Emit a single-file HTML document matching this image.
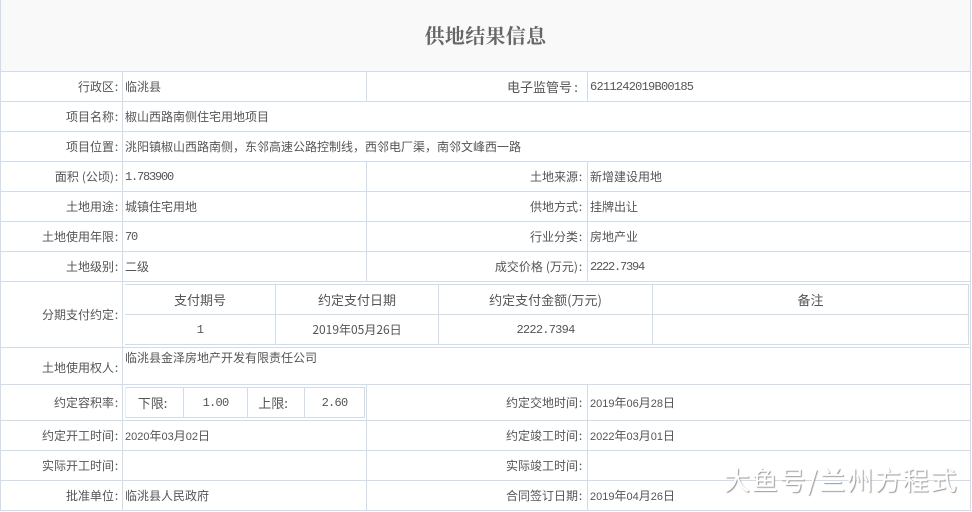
<!DOCTYPE html>
<html lang="zh-CN">
<head>
<meta charset="utf-8">
<title>供地结果信息</title>
<style>
html,body{margin:0;padding:0;background:#fff;}
#p{position:relative;width:972px;height:512px;overflow:hidden;background:#fff;font-family:"WenQuanYi Zen Hei","Noto Sans CJK SC",sans-serif;font-size:12px;color:#555;}
#p div{position:absolute;}
.h{height:1px;background:#cfdcec;}
.v{width:1px;background:#cfdcec;}
.t{white-space:nowrap;line-height:16px;height:16px;margin-top:1px;}
.l{text-align:right;left:0;width:119px;}
.r{text-align:right;left:400px;width:183px;}
.a{left:125px;}
.b{left:590px;}
.c{text-align:center;}
.m{font-family:"Liberation Mono",monospace;font-size:12px;letter-spacing:-1.2px;}
.n{font-family:"Liberation Mono",monospace;font-size:12px;letter-spacing:-.75px;}
i{font-style:normal;display:inline-block;width:5px;text-align:center;}
u{text-decoration:none;font-family:"Liberation Sans",sans-serif;font-size:11px;}
s{text-decoration:none;display:inline-block;width:3px;}
</style>
</head>
<body>
<div id="p">
<div style="left:0;top:0;width:971px;height:71px;background:#f9f9f9;"></div>
<div class="t" style="left:0;top:22px;width:971px;height:24px;line-height:24px;text-align:center;font-family:'Noto Serif CJK SC','Liberation Serif',serif;font-weight:700;font-size:20px;letter-spacing:.3px;color:#666;">供地结果信息</div>

<!-- horizontal -->
<div class="h" style="left:0;top:71px;width:971px;"></div>
<div class="h" style="left:0;top:101px;width:971px;"></div>
<div class="h" style="left:0;top:131px;width:971px;"></div>
<div class="h" style="left:0;top:161px;width:971px;"></div>
<div class="h" style="left:0;top:191px;width:971px;"></div>
<div class="h" style="left:0;top:221px;width:971px;"></div>
<div class="h" style="left:0;top:251px;width:971px;"></div>
<div class="h" style="left:0;top:281px;width:971px;"></div>
<div class="h" style="left:0;top:347px;width:971px;"></div>
<div class="h" style="left:0;top:384px;width:971px;"></div>
<div class="h" style="left:0;top:420px;width:971px;"></div>
<div class="h" style="left:0;top:450px;width:971px;"></div>
<div class="h" style="left:0;top:480px;width:971px;"></div>
<div class="h" style="left:0;top:510px;width:971px;"></div>

<!-- vertical -->
<div class="v" style="left:0;top:0;height:511px;"></div>
<div class="v" style="left:970px;top:0;height:511px;"></div>
<div class="v" style="left:122px;top:71px;height:440px;"></div>
<div class="v" style="left:366px;top:71px;height:30px;"></div>
<div class="v" style="left:587px;top:71px;height:30px;"></div>
<div class="v" style="left:366px;top:161px;height:120px;"></div>
<div class="v" style="left:587px;top:161px;height:120px;"></div>
<div class="v" style="left:366px;top:384px;height:127px;"></div>
<div class="v" style="left:587px;top:384px;height:127px;"></div>

<!-- nested payment table -->
<div class="h" style="left:125px;top:284px;width:844px;"></div>
<div class="h" style="left:125px;top:314px;width:844px;"></div>
<div class="h" style="left:125px;top:344px;width:844px;"></div>
<div class="v" style="left:275px;top:284px;height:61px;"></div>
<div class="v" style="left:438px;top:284px;height:61px;"></div>
<div class="v" style="left:652px;top:284px;height:61px;"></div>
<div class="v" style="left:968px;top:284px;height:61px;"></div>

<!-- nested FAR table -->
<div class="h" style="left:125px;top:387px;width:240px;"></div>
<div class="h" style="left:125px;top:417px;width:240px;"></div>
<div class="v" style="left:125px;top:387px;height:31px;background:#e6edf6;"></div>
<div class="v" style="left:183px;top:387px;height:31px;"></div>
<div class="v" style="left:247px;top:387px;height:31px;"></div>
<div class="v" style="left:304px;top:387px;height:31px;"></div>
<div class="v" style="left:364px;top:387px;height:31px;"></div>

<!-- labels left -->
<div class="t l" style="top:78px;">行政区<i>:</i></div>
<div class="t l" style="top:108px;">项目名称<i>:</i></div>
<div class="t l" style="top:138px;">项目位置<i>:</i></div>
<div class="t l" style="top:168px;">面积<s></s>(公顷)<i>:</i></div>
<div class="t l" style="top:198px;">土地用途<i>:</i></div>
<div class="t l" style="top:228px;">土地使用年限<i>:</i></div>
<div class="t l" style="top:258px;">土地级别<i>:</i></div>
<div class="t l" style="top:306px;">分期支付约定<i>:</i></div>
<div class="t l" style="top:359px;">土地使用权人<i>:</i></div>
<div class="t l" style="top:394px;">约定容积率<i>:</i></div>
<div class="t l" style="top:427px;">约定开工时间<i>:</i></div>
<div class="t l" style="top:457px;">实际开工时间<i>:</i></div>
<div class="t l" style="top:487px;">批准单位<i>:</i></div>

<!-- values left -->
<div class="t a" style="top:78px;">临洮县</div>
<div class="t a" style="top:108px;">椒山西路南侧住宅用地项目</div>
<div class="t a" style="top:138px;">洮阳镇椒山西路南侧，东邻高速公路控制线，西邻电厂渠，南邻文峰西一路</div>
<div class="t a m" style="top:168px;">1.783900</div>
<div class="t a" style="top:198px;">城镇住宅用地</div>
<div class="t a m" style="top:228px;">70</div>
<div class="t a" style="top:258px;">二级</div>
<div class="t a" style="top:349px;">临洮县金泽房地产开发有限责任公司</div>
<div class="t a" style="top:427px;"><u>2020</u>年<u>03</u>月<u>02</u>日</div>
<div class="t a" style="top:487px;">临洮县人民政府</div>

<!-- labels right -->
<div class="t r" style="top:78px;font-size:13px;width:180px;">电子监管号<i style="width:8px;">:</i></div>
<div class="t r" style="top:168px;">土地来源<i>:</i></div>
<div class="t r" style="top:198px;">供地方式<i>:</i></div>
<div class="t r" style="top:228px;">行业分类<i>:</i></div>
<div class="t r" style="top:258px;">成交价格<s></s>(万元)<i>:</i></div>
<div class="t r" style="top:394px;">约定交地时间<i>:</i></div>
<div class="t r" style="top:427px;">约定竣工时间<i>:</i></div>
<div class="t r" style="top:457px;">实际竣工时间<i>:</i></div>
<div class="t r" style="top:487px;">合同签订日期<i>:</i></div>

<!-- values right -->
<div class="t b n" style="top:78px;">6211242019B00185</div>
<div class="t b" style="top:168px;">新增建设用地</div>
<div class="t b" style="top:198px;">挂牌出让</div>
<div class="t b" style="top:228px;">房地产业</div>
<div class="t b m" style="top:258px;">2222.7394</div>
<div class="t b" style="top:394px;"><u>2019</u>年<u>06</u>月<u>28</u>日</div>
<div class="t b" style="top:427px;"><u>2022</u>年<u>03</u>月<u>01</u>日</div>
<div class="t b" style="top:487px;"><u>2019</u>年<u>04</u>月<u>26</u>日</div>

<!-- payment table text -->
<div class="t c" style="left:125px;width:150px;top:291px;font-size:13px;">支付期号</div>
<div class="t c" style="left:276px;width:162px;top:291px;font-size:13px;">约定支付日期</div>
<div class="t c" style="left:439px;width:213px;top:291px;font-size:13px;">约定支付金额(万元)</div>
<div class="t c" style="left:653px;width:315px;top:291px;font-size:13px;">备注</div>
<div class="t c n" style="left:125px;width:150px;top:321px;">1</div>
<div class="t c" style="left:276px;width:162px;top:321px;">2019年05月26日</div>
<div class="t c n" style="left:439px;width:213px;top:321px;">2222.7394</div>

<!-- FAR table text -->
<div class="t c" style="left:126px;width:53px;top:394px;font-size:13px;">下限:</div>
<div class="t c n" style="left:184px;width:63px;top:394px;">1.00</div>
<div class="t c" style="left:248px;width:50px;top:394px;font-size:13px;">上限:</div>
<div class="t c n" style="left:305px;width:59px;top:394px;">2.60</div>

<!-- watermark -->
<div class="t" style="left:724px;top:463px;height:32px;line-height:32px;font-size:26px;letter-spacing:1.8px;color:#fff;text-shadow:1px 1px 1px #999;font-family:'Noto Sans CJK SC',sans-serif;">大鱼号/兰州方程式</div>
</div>
</body>
</html>
